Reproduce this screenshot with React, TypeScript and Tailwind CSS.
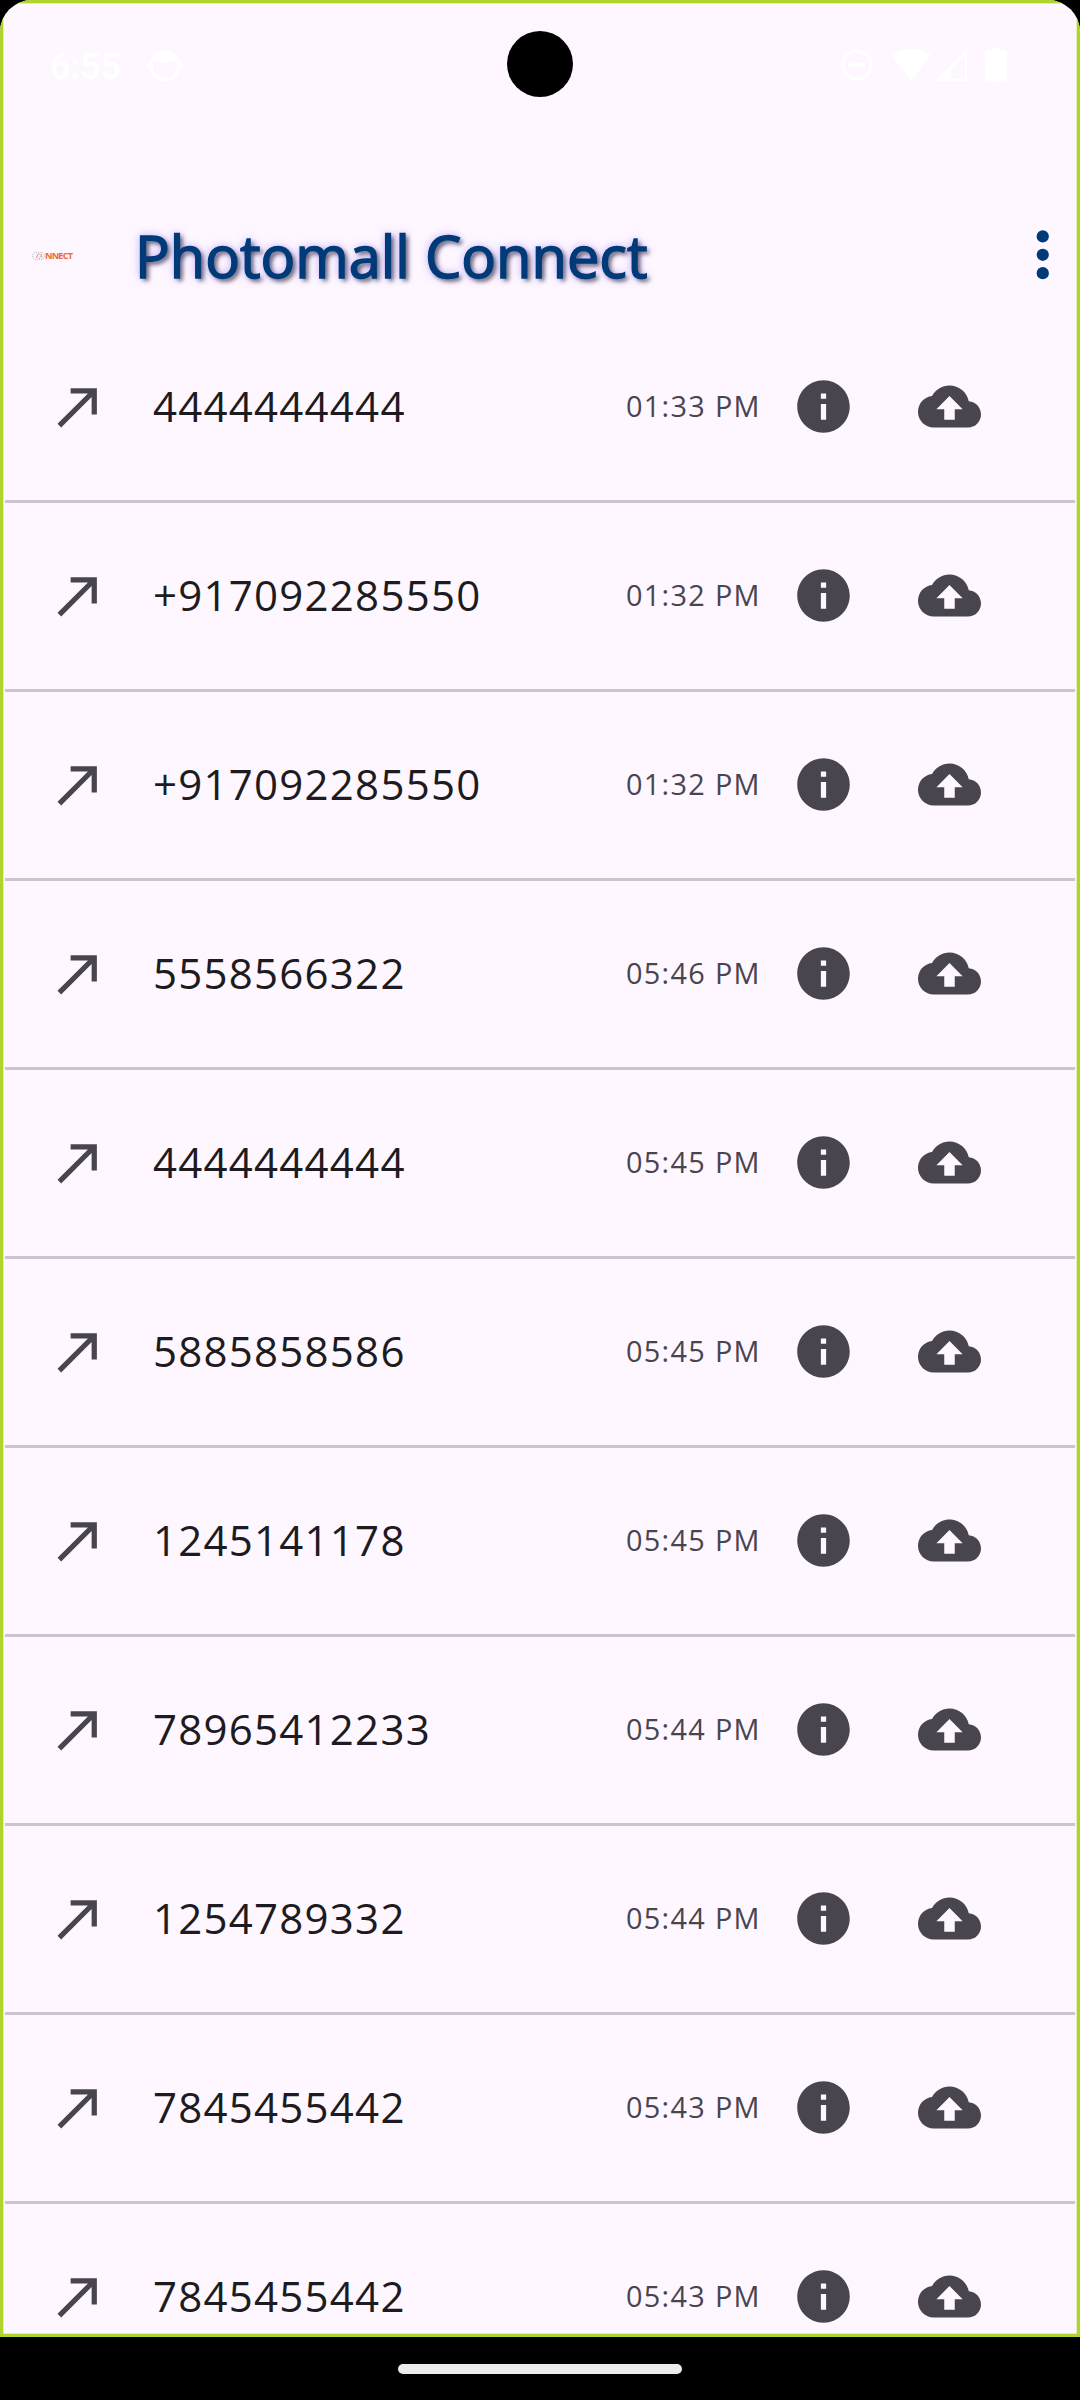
import type { ReactNode } from 'react'

interface Call {
  number: string
  time: string
}

const calls: Call[] = [
  { number: '4444444444', time: '01:33 PM' },
  { number: '+917092285550', time: '01:32 PM' },
  { number: '+917092285550', time: '01:32 PM' },
  { number: '5558566322', time: '05:46 PM' },
  { number: '4444444444', time: '05:45 PM' },
  { number: '5885858586', time: '05:45 PM' },
  { number: '1245141178', time: '05:45 PM' },
  { number: '78965412233', time: '05:44 PM' },
  { number: '1254789332', time: '05:44 PM' },
  { number: '7845455442', time: '05:43 PM' },
  { number: '7845455442', time: '05:43 PM' },
]

function Icon({ className, children }: { className: string; children: ReactNode }) {
  return (
    <svg viewBox="0 0 24 24" fill="currentColor" className={`shrink-0 ${className}`}>
      {children}
    </svg>
  )
}

function StatusBar() {
  return (
    <div className="relative h-[124px] shrink-0 flex items-center justify-between pl-[46px] pr-[69px] text-white">
      <div className="flex items-center">
        <span className="w-[72px] mt-[1px] text-[36px] leading-none font-medium font-['Roboto',sans-serif]">6:55</span>
        <svg viewBox="0 0 36 36" className="ml-[25px] size-9">
          <circle cx="18" cy="18" r="14" fill="none" stroke="currentColor" strokeWidth="3.5" />
          <path d="M5 12Q18 17 31 12Q25 2 18 2Q10 2 5 12Z" fill="currentColor" />
          <circle cx="3" cy="18" r="3" fill="currentColor" />
          <circle cx="33" cy="18" r="3" fill="currentColor" />
        </svg>
      </div>
      <div className="absolute left-[503px] top-[27px] size-[66px] rounded-full bg-black" />
      <div className="flex items-center -mt-[3px]">
        <svg viewBox="0 0 32 32" className="size-8 mr-[18px]">
          <circle cx="16" cy="16" r="14" fill="none" stroke="currentColor" strokeWidth="3.5" />
          <path d="M8 16H24" stroke="currentColor" strokeWidth="3.5" />
        </svg>
        <svg viewBox="0 0 40 32" className="w-10 h-8 mr-[4px]">
          <path d="M0 6Q20-6 40 6L20 32Z" fill="currentColor" />
        </svg>
        <svg viewBox="0 0 32 32" className="size-8 mr-[18px]">
          <path d="M3 31L31 3V31Z" fill="none" stroke="currentColor" strokeWidth="2.5" />
          <path d="M0 32L16 16V32Z" fill="currentColor" />
        </svg>
        <svg viewBox="0 0 22 34" className="w-[22px] h-[34px]">
          <path d="M7 0H15V3H20Q22 3 22 5V34H0V5Q0 3 2 3H7Z" fill="currentColor" />
        </svg>
      </div>
    </div>
  )
}

function AppBar() {
  return (
    <div className="h-[118px] shrink-0 mt-[68px] flex items-center pl-[28px]">
      {/* tiny brand mark, first two letters are only dotted in */}
      <div className="w-[42px] mt-[2px] shrink-0 flex items-center">
        <svg viewBox="0 0 13 10" className="w-[13px] h-[10px] shrink-0">
          <g fill="none" stroke="#a4a0ae" strokeWidth="0.8" strokeDasharray="1.2 0.9">
            <circle cx="4.5" cy="5" r="3.8" />
            <circle cx="9" cy="5" r="3.5" />
          </g>
          <path d="M4 7L6 3M9 3L10 7" stroke="#f08a5c" strokeWidth="0.9" />
        </svg>
        <span className="text-[9.2px] leading-[16px] font-bold tracking-[-0.8px] text-[#ea6a35] whitespace-nowrap">NNECT</span>
      </div>
      <h1 className="ml-[61px] mt-[2px] grow text-[57.75px] leading-none font-medium text-[#003a78] [-webkit-text-stroke:1.5px_#003a78] [text-shadow:3px_3px_4px_#1d1b20aa,0_0_9px_#5a3df088] whitespace-nowrap">
        Photomall Connect
      </h1>
      <Icon className="size-[73.5px] -mr-[3px] text-[#003a78]">
        <circle cx="12" cy="6" r="2" />
        <circle cx="12" cy="12" r="2" />
        <circle cx="12" cy="18" r="2" />
      </Icon>
    </div>
  )
}

function CallRow({ call }: { call: Call }) {
  return (
    <li className="h-[189px] shrink-0 mx-[1px] pb-[1px] flex items-center border-b-3 border-[#cac4d0] text-[#49454f]">
      <Icon className="size-[63px] ml-[42px]">
        <path d="M9 5v2h6.59L4 18.59 5.41 20 17 8.41V15h2V5z" />
      </Icon>
      <span className="ml-[43px] mb-[2px] grow text-[42px] leading-none tracking-[1.25px] text-[#1d1b20]">{call.number}</span>
      <span className="w-[134px] mr-[32px] text-[28.875px] leading-none tracking-[1.31px] whitespace-nowrap">{call.time}</span>
      <Icon className="size-[63px]">
        <path d="M12 2C6.48 2 2 6.48 2 12s4.48 10 10 10 10-4.48 10-10S17.52 2 12 2zm1 15h-2v-6h2v6zm0-8h-2V7h2v2z" />
      </Icon>
      <Icon className="size-[63px] ml-[63px] mr-[94px]">
        <path d="M19.35 10.04C18.67 6.59 15.64 4 12 4 9.11 4 6.6 5.64 5.35 8.04 2.34 8.36 0 10.91 0 14c0 3.31 2.69 6 6 6h13c2.76 0 5-2.24 5-5 0-2.64-2.05-4.78-4.65-4.96zM14 13v4h-4v-4H7l5-5 5 5h-3z" />
      </Icon>
    </li>
  )
}

export default function App() {
  return (
    <div className="w-[1080px] h-[2400px] flex flex-col bg-black overflow-hidden font-['Open_Sans','Noto_Sans',sans-serif]">
      <div className="h-[2337px] shrink-0 rounded-t-[32px] overflow-hidden">
        <div className="h-full flex flex-col border-[3px] border-[#afd52a] bg-[#fef7ff]">
          <div className="min-h-0 grow flex flex-col border border-[#e2edbb] overflow-hidden">
            <StatusBar />
            <AppBar />
            <ul className="min-h-0 grow flex flex-col overflow-hidden">
              {calls.map((call, i) => (
                <CallRow key={i} call={call} />
              ))}
            </ul>
          </div>
        </div>
      </div>
      <div className="grow flex items-center justify-center">
        <div className="w-[284px] h-[10px] rounded-full bg-[#ececec]" />
      </div>
    </div>
  )
}
